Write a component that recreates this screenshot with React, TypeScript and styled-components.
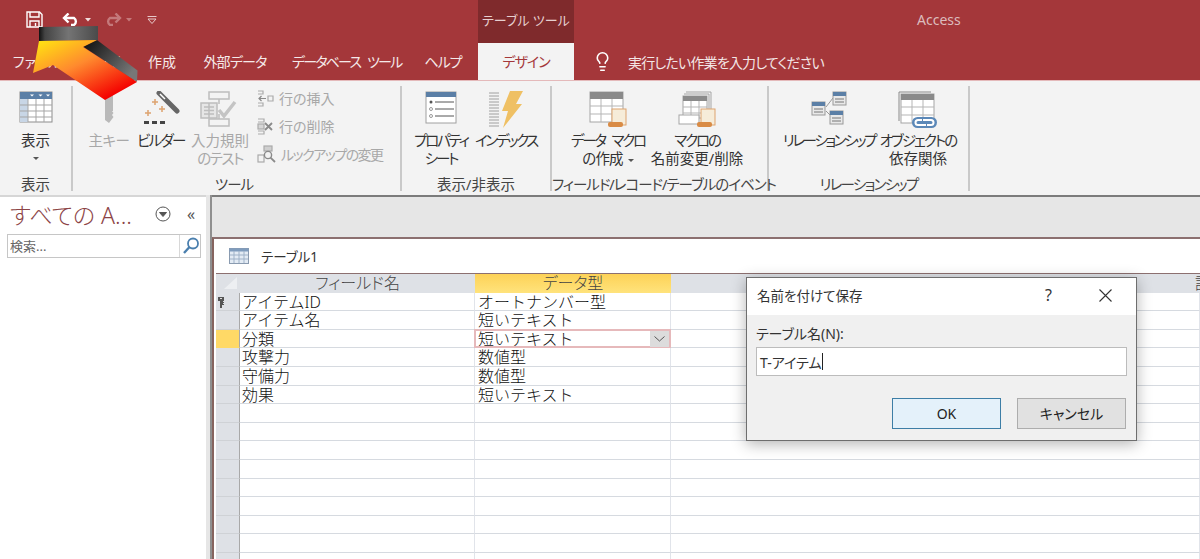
import React from "react";
import styled, { createGlobalStyle } from "styled-components";
import { Lightbulb } from "lucide-react";

const GlobalStyle = createGlobalStyle`
  html, body {
    margin: 0;
    padding: 0;
    background: #fff;
  }
  body {
    font-family: "Noto Sans", "Noto Sans CJK JP", sans-serif;
    font-feature-settings: "palt";
    font-size: 14px;
    color: #333;
  }
  * { box-sizing: border-box; }
  svg { display: block; }
`;

const Page = styled.div`
  position: relative;
  width: 1200px;
  height: 559px;
  overflow: hidden;
  background: #fff;
`;

const Tight = styled.span<{ $t: number }>`
  letter-spacing: ${(p) => p.$t}px;
  word-spacing: 5px;
`;

const TitleBar = styled.div`
  display: grid;
  grid-template-columns: 478px 96px 1fr;
  height: 43px;
  background: #a4373a;
`;

const Qat = styled.div`
  display: flex;
  align-items: center;
  padding: 0 0 4px 26px;
`;

const ContextTab = styled.div`
  background: #7f2a2c;
  color: #e6cfcf;
  font-size: 13px;
  line-height: 40px;
  text-align: center;
`;

const AppName = styled.div`
  color: #dcbcbd;
  font-size: 14px;
  line-height: 39px;
  padding-left: 343px;
`;

const TabRow = styled.div`
  display: flex;
  height: 37px;
  background: #a4373a;
`;

const Tab = styled.div<{ $w: number; $indent?: number; $active?: boolean }>`
  width: ${(p) => p.$w}px;
  padding-left: ${(p) => p.$indent || 0}px;
  text-align: center;
  font-size: 14px;
  line-height: 37px;
  white-space: nowrap;
  color: ${(p) => (p.$active ? "#a4373a" : "#f5e9e9")};
  background: ${(p) => (p.$active ? "#f3f3f3" : "transparent")};
`;

const TellMe = styled.div`
  display: flex;
  align-items: center;
  gap: 15px;
  padding-left: 18px;
  color: #f3e6e6;
  font-size: 14px;
  letter-spacing: -0.8px;
`;

const Ribbon = styled.div`
  display: flex;
  height: 115px;
  padding-top: 5px;
  background: #f3f3f3;
  border-top: 1px solid #e4b9ba;
`;

const Group = styled.div<{ $w: number; $pad?: number }>`
  display: flex;
  flex-direction: column;
  width: ${(p) => p.$w}px;
  height: 105px;
  padding-left: ${(p) => p.$pad || 0}px;
  border-right: 2px solid #c9c9c9;
`;

const GroupItems = styled.div`
  display: flex;
  height: 87px;
  padding-top: 3px;
`;

const GroupLabel = styled.div<{ $shift?: number }>`
  margin-top: auto;
  margin-bottom: -2px;
  margin-left: ${(p) => p.$shift || 0}px;
  line-height: 18px;
  height: 18px;
  text-align: center;
  white-space: nowrap;
  font-size: 14.5px;
  color: #444;
`;

const LargeButton = styled.div<{ $w: number; $disabled?: boolean }>`
  display: flex;
  flex-direction: column;
  align-items: center;
  width: ${(p) => p.$w}px;
  font-size: 14.5px;
  line-height: 18px;
  text-align: center;
  white-space: nowrap;
  color: ${(p) => (p.$disabled ? "#a8a8a8" : "#333")};
`;

const IconSlot = styled.div`
  display: flex;
  justify-content: center;
  align-items: flex-start;
  height: 42px;
  padding-top: 2px;
`;

const Caret = styled.span`
  display: inline-block;
  width: 0;
  height: 0;
  margin: 0 0 2px 5px;
  border-left: 3px solid transparent;
  border-right: 3px solid transparent;
  border-top: 3px solid #555;
`;

const MenuCaret = styled(Caret)`
  margin: 8px 0 0;
`;

const SmallColumn = styled.div`
  display: flex;
  flex-direction: column;
  gap: 10px;
  margin-left: 7px;
`;

const SmallButton = styled.div`
  display: flex;
  align-items: center;
  gap: 5px;
  height: 18px;
  color: #a8a8a8;
  font-size: 14px;
  white-space: nowrap;
`;

const Body = styled.div`
  display: flex;
  height: 364px;
`;

const NavPane = styled.div`
  width: 206px;
  padding: 0 5px 0 7px;
  background: #fff;
  border-top: 2px solid #d6d6d6;
`;

const NavHead = styled.div`
  display: flex;
  align-items: center;
  height: 33px;
  margin-bottom: 4px;
`;

const NavTitle = styled.div`
  width: 148px;
  padding-left: 3px;
  color: #8c4446;
  font-size: 23px;
  font-weight: 300;
  white-space: nowrap;
`;

const NavChevrons = styled.div`
  margin-left: 16px;
  color: #555;
  font-size: 16px;
`;

const SearchBox = styled.div`
  display: flex;
  justify-content: space-between;
  height: 24px;
  border: 1px solid #c6c6c6;
  color: #666;
  font-size: 13px;
  line-height: 22px;
  padding-left: 2px;
`;

const SearchIcon = styled.div`
  width: 21px;
  padding: 2px;
  border-left: 1px solid #d8d8d8;
`;

const Splitter = styled.div`
  width: 6px;
  background: #e6e6e6;
  border-right: 2px solid #8f8f8f;
`;

const Workspace = styled.div`
  flex: 1;
  padding-top: 40px;
  background: #e6e6e6;
  border-top: 2px solid #7b7b7b;
`;

const DocWindow = styled.div`
  height: 322px;
  padding-left: 2px;
  background: #fff;
  border-top: 2px solid #8c7070;
  border-left: 2px solid #86645f;
  overflow: hidden;
`;

const DocTitle = styled.div`
  display: flex;
  align-items: center;
  gap: 12px;
  height: 35px;
  padding-left: 13px;
  font-size: 13.5px;
  border-bottom: 1px solid #8c7070;
`;

const Row = styled.div`
  display: grid;
  grid-template-columns: 24px 235px 196px 1fr;
  height: 18.6px;
`;

const HeaderCell = styled.div<{ $active?: boolean }>`
  height: 18.6px;
  font-size: 16px;
  font-weight: 300;
  line-height: 18px;
  text-align: center;
  white-space: nowrap;
  color: #444;
  background: ${(p) => (p.$active ? "linear-gradient(#fdd257, #ffe37c)" : "#dee1e6")};
`;

const ClippedHeaderCell = styled(HeaderCell)`
  text-align: left;
  padding-left: 524px;
  overflow: hidden;
`;

const CornerCell = styled.div`
  display: flex;
  padding: 3px 0 0 8px;
  background: #dee1e6;
`;

const Selector = styled.div<{ $current?: boolean }>`
  display: flex;
  justify-content: flex-start;
  padding: 4px 0 0 2px;
  background: ${(p) => (p.$current ? "#ffd966" : "#dee1e6")};
  border-right: 1px solid #a9a9a9;
  border-bottom: 1px solid ${(p) => (p.$current ? "#ffd966" : "#cfd2d6")};
`;

const Cell = styled.div<{ $edge?: boolean }>`
  position: relative;
  height: 18.6px;
  padding-left: ${(p) => (p.$edge ? 3 : 2)}px;
  font-size: 16px;
  font-weight: 300;
  line-height: 18px;
  font-feature-settings: normal;
  color: #111;
  white-space: nowrap;
  border-bottom: 1px solid #d6dae0;
  border-right: 1px solid #e1e4ea;
`;

const ActiveBox = styled.div`
  position: absolute;
  top: -1px;
  left: -1px;
  right: -1px;
  bottom: -1px;
  border: 2px solid #e6b9bb;
  pointer-events: none;
`;

const DropButton = styled.div`
  position: absolute;
  top: 1px;
  right: 1px;
  width: 19px;
  height: 16px;
  display: flex;
  align-items: center;
  justify-content: center;
  background: #dcdcdc;
`;

const Dialog = styled.div`
  position: absolute;
  left: 746px;
  top: 277px;
  width: 391px;
  height: 164px;
  background: #f0f0f0;
  border: 1px solid #6e6e6e;
  box-shadow: 0 3px 14px rgba(0, 0, 0, 0.3);
`;

const DialogTitle = styled.div`
  display: flex;
  align-items: center;
  height: 37px;
  padding: 0 24px 3px 10px;
  background: #fff;
  font-size: 13.5px;
  color: #333;
  white-space: nowrap;
`;

const DialogCaption = styled.div`
  flex: 1;
`;

const HelpMark = styled.div`
  margin-right: 47px;
  font-size: 16px;
`;

const DialogBody = styled.div`
  padding: 9px 9px 0;
`;

const FieldLabel = styled.div`
  font-size: 14px;
  line-height: 20px;
  color: #333;
`;

const NameInput = styled.div`
  display: flex;
  align-items: center;
  height: 29px;
  margin-top: 3px;
  padding-left: 3px;
  background: #fff;
  border: 1px solid #bcbcbc;
  font-size: 14px;
  color: #333;
`;

const TextCaret = styled.span`
  width: 1px;
  height: 17px;
  background: #222;
`;

const DialogButtons = styled.div`
  display: flex;
  justify-content: flex-end;
  gap: 16px;
  margin: 22px 1px 0 0;
`;

const DialogButton = styled.div<{ $primary?: boolean }>`
  width: 109px;
  height: 31px;
  text-align: center;
  font-size: 14px;
  line-height: 29px;
  color: #222;
  background: ${(p) => (p.$primary ? "#e4f1fa" : "#e1e1e1")};
  border: 1px solid ${(p) => (p.$primary ? "#3d7ea6" : "#adadad")};
`;

const ArrowOverlay = styled.svg`
  position: absolute;
  left: 0;
  top: 0;
  pointer-events: none;
`;

const QatGap = styled.div<{ $w: number }>`
  width: ${(p) => p.$w}px;
`;

const Mirrored = styled.div`
  transform: scaleX(-1);
`;

const SaveIcon = () => (
  <svg width="17" height="17" viewBox="0 0 17 17" fill="none" stroke="#fff" strokeWidth="1.4">
    <path d="M1 1h12.5l2.5 2.5V16H1z" />
    <path d="M4 1v5h9V1M4 16v-6h9v6" />
    <path d="M9.5 12v3" />
  </svg>
);

const UndoIcon = ({ color }: { color: string }) => (
  <svg width="19" height="13" viewBox="0 0 19 13" fill="none" stroke={color} strokeWidth="2.4">
    <path d="M2 5h10a4.2 4.2 0 0 1 0 7H9" />
    <path d="M6.5 0.5 2 5l4.5 4.5" />
  </svg>
);

const MiniCaret = styled.svg<{ $mr: number }>`
  margin: 0 ${(p) => p.$mr}px 0 4px;
`;

const CustomizeIcon = () => (
  <svg width="10" height="8" viewBox="0 0 10 8" fill="none" stroke="#e8c9ca" strokeWidth="1">
    <path d="M0.5 0.5h9M1 3h8L5 7.5z" />
  </svg>
);

const ViewIcon = () => (
  <svg width="34" height="32" viewBox="0 0 34 32">
    <rect x="1" y="1" width="32" height="30" fill="#fff" stroke="#8d8d8d" />
    <rect x="1" y="1" width="32" height="7" fill="#5b7fa6" />
    <rect x="1" y="8" width="8" height="23" fill="#c8d6e6" />
    <path d="M9 8v23M17 8v23M25 8v23M1 14h32M1 20h32M1 26h32" stroke="#a5a5a5" strokeWidth="1" />
    <path d="M11 3.5h4l-2 2zM19.500 3.500h4l-2 2zM27 3.500h4l-2 2z" fill="#fff" />
  </svg>
);

const KeyIcon = () => (
  <svg width="16" height="34" viewBox="0 0 16 34" fill="#b9b9b9">
    <path d="M4 0h8v20h-1l1.500 2-1.500 2 1.500 2-1.500 2-3 4-4-3z" />
  </svg>
);

const BuilderIcon = () => (
  <svg width="38" height="36" viewBox="0 0 38 36">
    <path d="M17 2 35 20" stroke="#666" strokeWidth="5" strokeLinecap="round" />
    <path d="M18 3 23 8" stroke="#fff" strokeWidth="1.500" />
    <path d="M10 11h6M13 8v6M17 18h6M20 15v6M3 22h6M6 19v6" stroke="#dda36f" strokeWidth="1.500" />
    <path d="M2 30h5v3H2zM10 30h5v3h-5zM18 30h5v3h-5z" fill="#444" />
  </svg>
);

const ValidationIcon = () => (
  <svg width="40" height="36" viewBox="0 0 40 36" fill="none" stroke="#bdbdbd" strokeWidth="1.500">
    <rect x="9" y="1" width="20" height="7" />
    <rect x="9" y="28" width="20" height="7" />
    <path d="M19 8v5M19 23v5" />
    <rect x="1" y="12" width="16" height="15" fill="#e6e6e6" />
    <path d="M4 16h10M4 19.500h10M4 23h10M9 12v15" />
    <path d="M19 19l5 6 11-14" strokeWidth="3.500" stroke="#c4c4c4" />
  </svg>
);

const InsertRowIcon = () => (
  <svg width="17" height="17" viewBox="0 0 17 17" fill="none" stroke="#ababab" strokeWidth="1.200">
    <path d="M1 1h5v3H1M1 13h5v3H1M11 6h5v5h-5z" />
    <path d="M9 8.500H2M4.500 6 2 8.500 4.500 11" stroke="#8a8a8a" />
  </svg>
);

const DeleteRowIcon = () => (
  <svg width="17" height="17" viewBox="0 0 17 17" fill="none" stroke="#ababab" strokeWidth="1.200">
    <path d="M1 1h6v3H1M1 13h6v3H1" />
    <rect x="1" y="6" width="6" height="5" fill="#d6d6d6" />
    <path d="M8 5l7 7M15 5l-7 7" stroke="#8a8a8a" strokeWidth="1.800" />
  </svg>
);

const LookupIcon = () => (
  <svg width="19" height="18" viewBox="0 0 19 18" fill="none" stroke="#ababab" strokeWidth="1.200">
    <rect x="7" y="1" width="8" height="5" fill="#cfcfcf" />
    <rect x="1" y="10" width="6" height="7" />
    <circle cx="11" cy="10" r="3.600" stroke="#8a8a8a" strokeWidth="1.400" />
    <path d="M13.500 12.700 18 17" stroke="#8a8a8a" strokeWidth="1.800" />
  </svg>
);

const PropertyIcon = () => (
  <svg width="32" height="33" viewBox="0 0 32 33" fill="none">
    <rect x="1" y="1" width="30" height="31" fill="#fff" stroke="#a0a0a0" />
    <rect x="1" y="1" width="30" height="5" fill="#5b7fa6" />
    <path d="M10 11h19M10 18h19M10 25h19" stroke="#555" />
    <circle cx="6" cy="11" r="1.500" fill="#555" />
    <circle cx="6" cy="18" r="1.500" stroke="#999" />
    <circle cx="6" cy="25" r="1.500" stroke="#999" />
  </svg>
);

const IndexIcon = () => (
  <svg width="36" height="37" viewBox="0 0 36 37">
    <path
      d="M1 2h10M1 5h10M1 8h10M1 11h10M1 14h10M1 17h10M1 20h10M1 23h10M1 26h10M1 29h10M1 32h10M1 35h10"
      stroke="#a0a0a0"
    />
    <path d="M22 0h13l-7 13h6L15 37l5-17h-6z" fill="#efc064" />
  </svg>
);

const MacroScroll = ({ x, y }: { x: number; y: number }) => (
  <g transform={`translate(${x} ${y})`}>
    <rect x="4" y="0" width="14" height="16" fill="#f6ecd9" stroke="#dda36f" />
    <rect x="0" y="13" width="15" height="5" rx="2" fill="#d98b45" />
  </g>
);

const MacroIcon = () => (
  <svg width="38" height="38" viewBox="0 0 38 38">
    <rect x="1" y="1" width="33" height="30" fill="#fff" stroke="#a5a5a5" />
    <rect x="1" y="1" width="33" height="7" fill="#8a8a8a" />
    <path d="M12 8v23M23 8v23M1 15h33M1 23h33" stroke="#b5b5b5" />
    <MacroScroll x={19} y={18} />
  </svg>
);

const RenameMacroIcon = () => (
  <svg width="38" height="38" viewBox="0 0 38 38">
    <path d="M8 1h25v24" fill="none" stroke="#a5a5a5" />
    <path d="M6 3h25v24" fill="none" stroke="#a5a5a5" />
    <rect x="5" y="5" width="24" height="22" fill="#fff" stroke="#a5a5a5" />
    <rect x="5" y="5" width="24" height="5" fill="#8a8a8a" />
    <path d="M13 10v17M21 10v17M5 16h24M5 22h24" stroke="#b5b5b5" />
    <rect x="1" y="24" width="20" height="9" fill="#fff" stroke="#a5a5a5" />
    <MacroScroll x={19} y={18} />
  </svg>
);

const RelationIcon = () => (
  <svg width="36" height="34" viewBox="0 0 36 34">
    <path d="M15 16 22 7M15 20l7 7" stroke="#999" fill="none" />
    <rect x="1" y="11" width="13" height="13" fill="#e9e9e9" stroke="#999" />
    <rect x="1" y="11" width="13" height="4" fill="#5b7fa6" />
    <path d="M3 18h9M3 21h9" stroke="#777" />
    <rect x="22" y="1" width="13" height="13" fill="#e9e9e9" stroke="#999" />
    <rect x="22" y="1" width="13" height="4" fill="#5b7fa6" />
    <path d="M24 8h9M24 11h9" stroke="#777" />
    <rect x="19" y="20" width="13" height="13" fill="#e9e9e9" stroke="#999" />
    <rect x="19" y="20" width="13" height="4" fill="#5b7fa6" />
    <path d="M21 27h9M21 30h9" stroke="#777" />
  </svg>
);

const DependencyIcon = () => (
  <svg width="40" height="38" viewBox="0 0 40 38">
    <path d="M1 30V1h32" fill="none" stroke="#8a8a8a" />
    <rect x="3" y="3" width="33" height="29" fill="#fff" stroke="#a5a5a5" />
    <rect x="3" y="3" width="33" height="6" fill="#8a8a8a" />
    <path d="M14 9v23M25 9v23M3 16h33M3 24h33" stroke="#b5b5b5" />
    <rect x="14" y="26" width="25" height="11" rx="5.500" fill="#5b88b8" />
    <path d="M24 29h-4a2.500 2.500 0 0 0 0 5h8M29 34h4a2.500 2.500 0 0 0 0-5h-8" stroke="#fff" strokeWidth="2" fill="none" />
  </svg>
);

const NavMenuIcon = () => (
  <svg width="16" height="16" viewBox="0 0 16 16" fill="none" stroke="#555" strokeWidth="1">
    <circle cx="8" cy="8" r="7" />
    <path d="M4.500 6.500h7L8 10.500z" fill="#555" />
  </svg>
);

const MagnifierIcon = () => (
  <svg width="18" height="18" viewBox="0 0 18 18" fill="none" stroke="#4a7fae" strokeWidth="1.800">
    <circle cx="11" cy="6.500" r="5" />
    <path d="M7.500 10 2 16" strokeWidth="2.400" />
  </svg>
);

const DocTableIcon = () => (
  <svg width="20" height="16" viewBox="0 0 20 16">
    <rect x="0.500" y="0.500" width="19" height="15" fill="#e3ebf4" stroke="#8a9bb0" />
    <rect x="0.500" y="0.500" width="19" height="3" fill="#7f9cbd" />
    <path d="M5 3v12M10 3v12M15 3v12M1 7h18M1 11h18" stroke="#9fb2c8" />
  </svg>
);

const KeyGlyph = () => (
  <svg width="7" height="11" viewBox="0 0 7 11" fill="#555">
    <path d="M0 0h6v4H5v1h1v1H5v1h1v1H4v3H2V4H0z" />
    <path d="M2 1h2v1H2z" fill="#ddd" />
  </svg>
);

const CornerGlyph = () => (
  <svg width="13" height="12" viewBox="0 0 13 12">
    <path d="M13 0v12H0z" fill="#edeff2" />
  </svg>
);

const ChevronGlyph = () => (
  <svg width="11" height="6" viewBox="0 0 11 6" fill="none" stroke="#555">
    <path d="M0.500 0.500 5.500 5l5-4.500" />
  </svg>
);

const CloseGlyph = () => (
  <svg width="13" height="13" viewBox="0 0 13 13" stroke="#333" strokeWidth="1.100">
    <path d="M0.500 0.500l12 12M12.500 0.500l-12 12" />
  </svg>
);

const fields = [
  { name: "アイテムID", type: "オートナンバー型", key: true },
  { name: "アイテム名", type: "短いテキスト" },
  { name: "分類", type: "短いテキスト", current: true },
  { name: "攻撃力", type: "数値型" },
  { name: "守備力", type: "数値型" },
  { name: "効果", type: "短いテキスト" },
  ...Array.from({ length: 9 }, () => ({ name: "", type: "" })),
] as { name: string; type: string; key?: boolean; current?: boolean }[];

const App = () => (
  <Page>
    <GlobalStyle />
    <TitleBar>
      <Qat>
        <SaveIcon />
        <QatGap $w={19} />
        <UndoIcon color="#fff" />
        <MiniCaret $mr={12} width="6" height="4" viewBox="0 0 6 4" fill="#f2dede">
          <path d="M0 0h6L3 3.5z" />
        </MiniCaret>
        <Mirrored>
          <UndoIcon color="#c4797b" />
        </Mirrored>
        <MiniCaret $mr={15} width="6" height="4" viewBox="0 0 6 4" fill="#c4797b">
          <path d="M0 0h6L3 3.5z" />
        </MiniCaret>
        <CustomizeIcon />
      </Qat>
      <ContextTab>テーブル ツール</ContextTab>
      <AppName>Access</AppName>
    </TitleBar>

    <TabRow>
      <Tab $w={74}>ファイル</Tab>
      <Tab $w={64}>ホーム</Tab>
      <Tab $w={48}>作成</Tab>
      <Tab $w={98}>
        <Tight $t={-0.8}>外部データ</Tight>
      </Tab>
      <Tab $w={114} $indent={8}>
        <Tight $t={-1.8}>データベース ツール</Tight>
      </Tab>
      <Tab $w={80} $indent={10}>
        <Tight $t={-1}>ヘルプ</Tight>
      </Tab>
      <Tab $w={96} $active>
        <Tight $t={-1}>デザイン</Tight>
      </Tab>
      <TellMe>
        <Lightbulb size={21} strokeWidth={1.8} color="#fff" />
        実行したい作業を入力してください
      </TellMe>
    </TabRow>

    <Ribbon>
      <Group $w={73}>
        <GroupItems>
          <LargeButton $w={71}>
            <IconSlot>
              <ViewIcon />
            </IconSlot>
            <span>表示</span>
            <MenuCaret />
          </LargeButton>
        </GroupItems>
        <GroupLabel>表示</GroupLabel>
      </Group>

      <Group $w={329} $pad={13}>
        <GroupItems>
          <LargeButton $w={46} $disabled>
            <IconSlot>
              <KeyIcon />
            </IconSlot>
            <Tight $t={-0.5}>主キー</Tight>
          </LargeButton>
          <LargeButton $w={58}>
            <IconSlot>
              <BuilderIcon />
            </IconSlot>
            <Tight $t={-1.7}>ビルダー</Tight>
          </LargeButton>
          <LargeButton $w={60} $disabled>
            <IconSlot>
              <ValidationIcon />
            </IconSlot>
            <span>入力規則</span>
            <Tight $t={-1.4}>のテスト</Tight>
          </LargeButton>
          <SmallColumn>
            <SmallButton>
              <InsertRowIcon />
              行の挿入
            </SmallButton>
            <SmallButton>
              <DeleteRowIcon />
              行の削除
            </SmallButton>
            <SmallButton>
              <LookupIcon />
              <Tight $t={-1.5}>ルックアップの変更</Tight>
            </SmallButton>
          </SmallColumn>
        </GroupItems>
        <GroupLabel $shift={-18}>
          <Tight $t={-1}>ツール</Tight>
        </GroupLabel>
      </Group>

      <Group $w={150} $pad={8}>
        <GroupItems>
          <LargeButton $w={62}>
            <IconSlot>
              <PropertyIcon />
            </IconSlot>
            <Tight $t={-2.2}>プロパティ</Tight>
            <Tight $t={-2}>シート</Tight>
          </LargeButton>
          <LargeButton $w={68}>
            <IconSlot>
              <IndexIcon />
            </IconSlot>
            <Tight $t={-2.4}>インデックス</Tight>
          </LargeButton>
        </GroupItems>
        <GroupLabel $shift={-8}>表示/非表示</GroupLabel>
      </Group>

      <Group $w={217} $pad={11}>
        <GroupItems>
          <LargeButton $w={90}>
            <IconSlot>
              <MacroIcon />
            </IconSlot>
            <Tight $t={-2.2}>データ マクロ</Tight>
            <span>
              <Tight $t={-0.8}>の作成</Tight>
              <Caret />
            </span>
          </LargeButton>
          <LargeButton $w={88}>
            <IconSlot>
              <RenameMacroIcon />
            </IconSlot>
            <Tight $t={-2.2}>マクロの</Tight>
            <span>名前変更/削除</span>
          </LargeButton>
        </GroupItems>
        <GroupLabel $shift={-11}>
          <Tight $t={-1}>フィールド/レコード/テーブルのイベント</Tight>
        </GroupLabel>
      </Group>

      <Group $w={201} $pad={10}>
        <GroupItems>
          <LargeButton $w={100}>
            <IconSlot>
              <RelationIcon />
            </IconSlot>
            <Tight $t={-2.4}>リレーションシップ</Tight>
          </LargeButton>
          <LargeButton $w={78}>
            <IconSlot>
              <DependencyIcon />
            </IconSlot>
            <Tight $t={-2}>オブジェクトの</Tight>
            <span>依存関係</span>
          </LargeButton>
        </GroupItems>
        <GroupLabel $shift={-10}>
          <Tight $t={-1.8}>リレーションシップ</Tight>
        </GroupLabel>
      </Group>
    </Ribbon>

    <Body>
      <NavPane>
        <NavHead>
          <NavTitle>すべての A...</NavTitle>
          <NavMenuIcon />
          <NavChevrons>«</NavChevrons>
        </NavHead>
        <SearchBox>
          検索...
          <SearchIcon>
            <MagnifierIcon />
          </SearchIcon>
        </SearchBox>
      </NavPane>
      <Splitter />
      <Workspace>
        <DocWindow>
          <DocTitle>
            <DocTableIcon />
            テーブル1
          </DocTitle>
          <Row>
            <CornerCell>
              <CornerGlyph />
            </CornerCell>
            <HeaderCell>フィールド名</HeaderCell>
            <HeaderCell $active>データ型</HeaderCell>
            <ClippedHeaderCell>説明</ClippedHeaderCell>
          </Row>
          {fields.map((f, i) => (
            <Row key={i}>
              <Selector $current={f.current}>{f.key && <KeyGlyph />}</Selector>
              <Cell>{f.name}</Cell>
              <Cell $edge>
                {f.type}
                {f.current && (
                  <>
                    <ActiveBox />
                    <DropButton>
                      <ChevronGlyph />
                    </DropButton>
                  </>
                )}
              </Cell>
              <Cell />
            </Row>
          ))}
        </DocWindow>
      </Workspace>
    </Body>

    <Dialog>
      <DialogTitle>
        <DialogCaption>名前を付けて保存</DialogCaption>
        <HelpMark>?</HelpMark>
        <CloseGlyph />
      </DialogTitle>
      <DialogBody>
        <FieldLabel>テーブル名(N):</FieldLabel>
        <NameInput>
          T-アイテム
          <TextCaret />
        </NameInput>
        <DialogButtons>
          <DialogButton $primary>OK</DialogButton>
          <DialogButton>キャンセル</DialogButton>
        </DialogButtons>
      </DialogBody>
    </Dialog>

    <ArrowOverlay width="140" height="104" viewBox="0 0 140 104">
      <defs>
        <linearGradient id="arrowFace" x1="0.08" y1="0.05" x2="0.8" y2="0.9">
          <stop offset="0" stopColor="#ffdc14" />
          <stop offset="0.45" stopColor="#ff8a2e" />
          <stop offset="1" stopColor="#f40000" />
        </linearGradient>
        <linearGradient id="arrowTop" x1="0" y1="0" x2="1" y2="0">
          <stop offset="0" stopColor="#111" />
          <stop offset="0.1" stopColor="#444" />
          <stop offset="0.5" stopColor="#747474" />
          <stop offset="1" stopColor="#4a4a4a" />
        </linearGradient>
        <linearGradient id="arrowSide" x1="0" y1="0" x2="1" y2="0.6">
          <stop offset="0" stopColor="#0c0c0c" />
          <stop offset="1" stopColor="#777" />
        </linearGradient>
      </defs>
      <polygon points="39,41 39,27 98,26 98,40" fill="url(#arrowTop)" />
      <polygon points="83,46.500 97,40 137.500,70.500 137,82" fill="url(#arrowSide)" />
      <polygon points="39,41 97,40 83,47 137,82 105,100 53,65 33,73" fill="url(#arrowFace)" />
    </ArrowOverlay>
  </Page>
);

export default App;
